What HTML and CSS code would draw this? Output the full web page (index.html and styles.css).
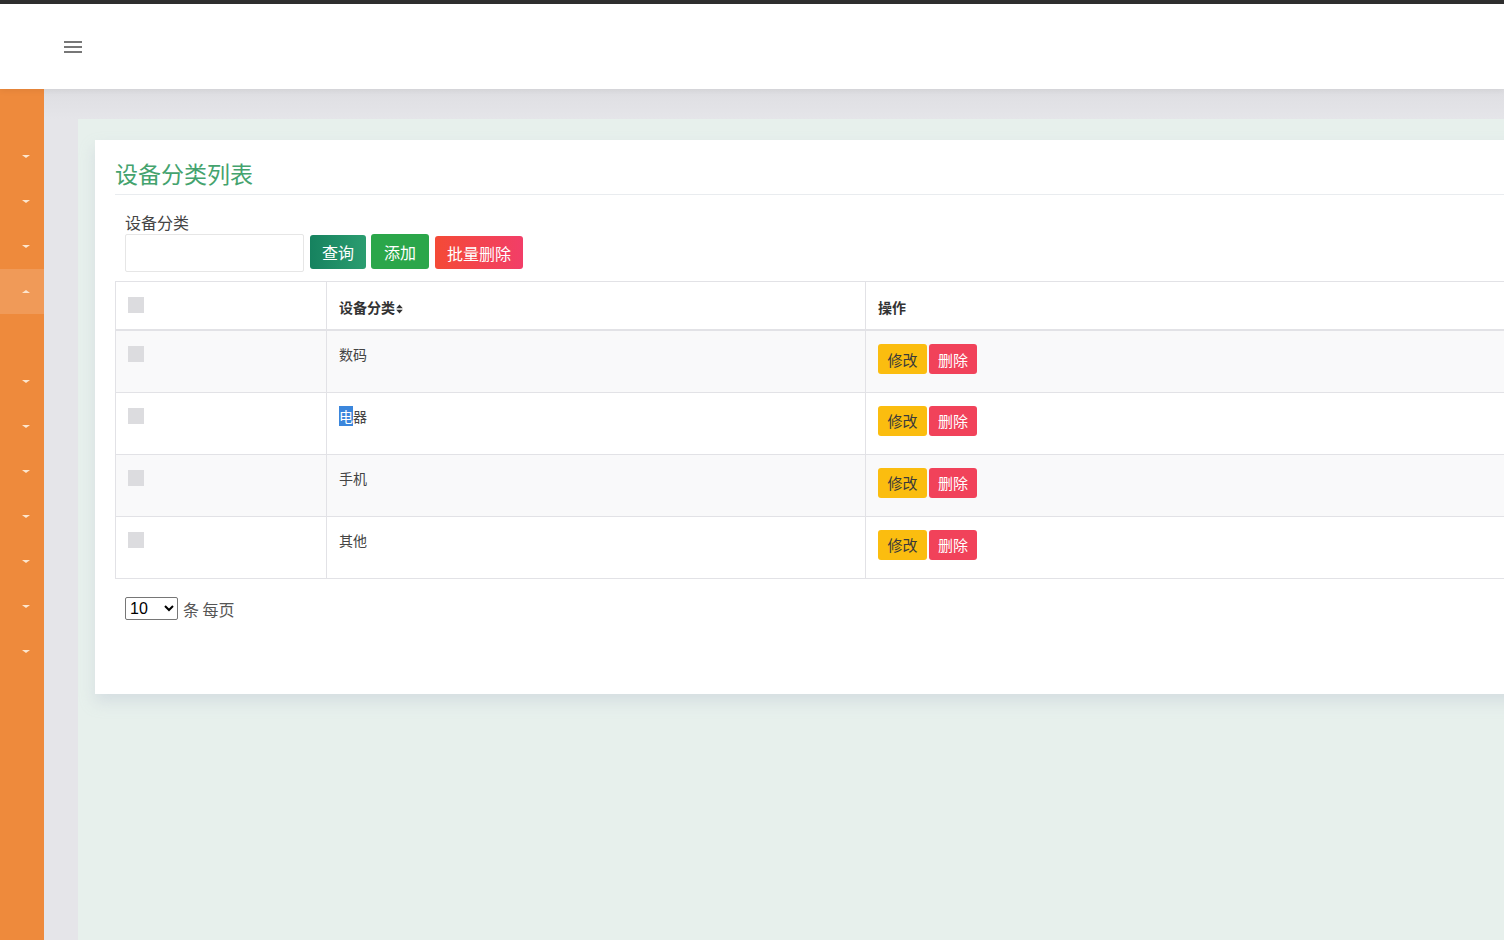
FILE: index.html
```html
<!DOCTYPE html>
<html lang="zh">
<head>
<meta charset="utf-8">
<title>设备分类列表</title>
<link rel="stylesheet" href="styles.css">
</head>
<body>
<div class="topbar"></div>
<header class="header">
  <span class="hamburger"><i></i><i></i><i></i></span>
</header>
<div class="layout">
  <nav class="sidebar">
    <div class="nav-spacer"></div>
    <div class="nav-item"><span class="caret"></span></div>
    <div class="nav-item"><span class="caret"></span></div>
    <div class="nav-item"><span class="caret"></span></div>
    <div class="nav-item active"><span class="caret up"></span></div>
    <div class="nav-item sub"></div>
    <div class="nav-item"><span class="caret"></span></div>
    <div class="nav-item"><span class="caret"></span></div>
    <div class="nav-item"><span class="caret"></span></div>
    <div class="nav-item"><span class="caret"></span></div>
    <div class="nav-item"><span class="caret"></span></div>
    <div class="nav-item"><span class="caret"></span></div>
    <div class="nav-item"><span class="caret"></span></div>
  </nav>
  <main class="main">
    <div class="content">
      <section class="card">
        <h2 class="card-title">设备分类列表</h2>
        <div class="search">
          <label class="search-label">设备分类</label>
          <div class="search-row">
            <input class="search-input" type="text">
            <button class="btn btn-query">查询</button>
            <button class="btn btn-add">添加</button>
            <button class="btn btn-batch">批量删除</button>
          </div>
        </div>
        <table class="table">
          <colgroup><col class="c1"><col class="c2"><col></colgroup>
          <thead>
            <tr><th><span class="chk"></span></th><th>设备分类<svg class="sort" width="7" height="10" viewBox="0 0 7 10"><path d="M3.5 0.5 L6.8 4.2 H0.2 Z M3.5 9.5 L6.8 5.8 H0.2 Z" fill="#333"/></svg></th><th>操作</th></tr>
          </thead>
          <tbody>
            <tr class="odd"><td><span class="chk"></span></td><td>数码</td><td><div class="ops"><button class="op op-edit">修改</button><button class="op op-del">删除</button></div></td></tr>
            <tr><td><span class="chk"></span></td><td><span class="sel">电</span>器</td><td><div class="ops"><button class="op op-edit">修改</button><button class="op op-del">删除</button></div></td></tr>
            <tr class="odd"><td><span class="chk"></span></td><td>手机</td><td><div class="ops"><button class="op op-edit">修改</button><button class="op op-del">删除</button></div></td></tr>
            <tr><td><span class="chk"></span></td><td>其他</td><td><div class="ops"><button class="op op-edit">修改</button><button class="op op-del">删除</button></div></td></tr>
          </tbody>
        </table>
        <div class="pager">
          <select class="page-size"><option>10</option><option>20</option></select>
          <span class="pager-text">条 每页</span>
        </div>
      </section>
    </div>
  </main>
</div>
</body>
</html>
```
FILE: styles.css
```css
* { box-sizing: border-box; }
html, body { margin: 0; padding: 0; height: 100%; overflow: hidden; }
body {
  font-family: "Noto Sans CJK SC", "Liberation Sans", sans-serif;
  color: #333;
  background: #e4e4e8;
}
.topbar { height: 4px; background: #2f2f2f; }
.header {
  height: 85px;
  background: #fff;
  display: flex;
  align-items: center;
  padding-left: 64px;
  position: relative;
  z-index: 2;
  box-shadow: 0 2px 6px rgba(0,0,0,0.06);
}
.hamburger { display: flex; flex-direction: column; gap: 3px; width: 18px; margin-top: 1px; }
.hamburger i { display: block; height: 2px; background: #777; }
.layout { display: flex; height: 851px; }
.sidebar { width: 44px; background: #ee8a3c; flex: none; }
.nav-spacer { height: 45px; }
.nav-item { height: 45px; display: flex; align-items: center; justify-content: center; }
.nav-item.active { background: #f09a58; }
.caret {
  width: 0; height: 0;
  border-left: 4px solid transparent;
  border-right: 4px solid transparent;
  border-top: 3px solid #fce6cf;
  margin-left: 8px;
}
.caret.up { border-top: 0; border-bottom: 3px solid #fce6cf; }
.main {
  flex: 1;
  min-width: 0;
  background: linear-gradient(#dedee2, #e5e5e9 30px);
  padding: 30px 0 0 34px;
  overflow: hidden;
}
.content {
  background: #e7f0ec;
  height: 100%;
  padding: 21px 0 0 17px;
  overflow: hidden;
}
.card {
  width: 1480px;
  background: #fff;
  padding: 0 0 73px 20px;
  box-shadow: 0 8px 14px rgba(180,190,205,0.35);
}
.card-title {
  margin: 0;
  padding: 18px 0 6px 0;
  font-size: 23px;
  line-height: 30px;
  font-weight: 400;
  color: #44a36e;
  border-bottom: 1px solid #e9ecef;
}
.search { padding: 17px 0 0 10px; }
.search-label { display: block; font-size: 16px; line-height: 20px; color: #444; }
.search-row { display: flex; align-items: flex-start; margin-top: 2px; }
.search-input {
  width: 179px; height: 38px;
  border: 1px solid #e6e6e6; border-radius: 2px;
  margin-right: 6px;
}
.btn {
  height: 34px; border: 0; border-radius: 3px;
  color: #fff; font-family: inherit; font-size: 16px;
  padding: 0; margin-top: 1px; margin-right: 5px;
}
.btn-query { background: linear-gradient(90deg, #16825f, #2b9d70); width: 56px; }
.btn-add { background: #2ba64a; width: 58px; height: 35px; margin-top: 0; margin-right: 6px; }
.btn-batch { background: linear-gradient(90deg, #f44a36, #f23e68); width: 88px; height: 33px; margin-top: 2px; }
.table {
  margin-top: 9px;
  width: 1440px;
  border-collapse: collapse;
  table-layout: fixed;
  font-size: 14px;
  border: 1px solid #e2e2e6;
}
.c1 { width: 211px; }
.c2 { width: 539px; }
.table th, .table td {
  text-align: left;
  vertical-align: top;
  border-left: 1px solid #e2e2e6;
  padding: 13px 12px;
  line-height: 20px;
}
.table th { padding: 15px 12px 12px; font-weight: 700; border-bottom: 2px solid #e2e2e6; color: #333; }
.table td { height: 62px; border-top: 1px solid #e2e2e6; color: #444; }
.table tbody tr:first-child td { border-top: 0; }
.table tr.odd td { background: #f9f9fa; }
.chk { display: block; width: 16px; height: 16px; background: #dcdcdf; }
.table td .chk { margin-top: 2px; }
.sort { margin-left: 1px; vertical-align: -1px; }
.sel { background: #3b86dc; color: #fff; }
.ops { display: flex; gap: 2px; }
.op {
  height: 30px; border: 0; border-radius: 3px;
  font-family: inherit; font-size: 15px; padding: 0;
}
.op-edit { background: #fbbd0f; color: #3a3a3a; width: 49px; }
.op-del { background: #f1425a; color: #fff; width: 48px; }
.pager { display: flex; align-items: center; margin-top: 18px; padding-left: 10px; }
.page-size {
  width: 53px; height: 23px; font-size: 16px;
  font-family: "Liberation Sans", sans-serif;
  border: 1px solid #767676; border-radius: 2px; background: #fff;
}
.pager-text { margin-left: 5px; font-size: 16px; color: #555; }
```
